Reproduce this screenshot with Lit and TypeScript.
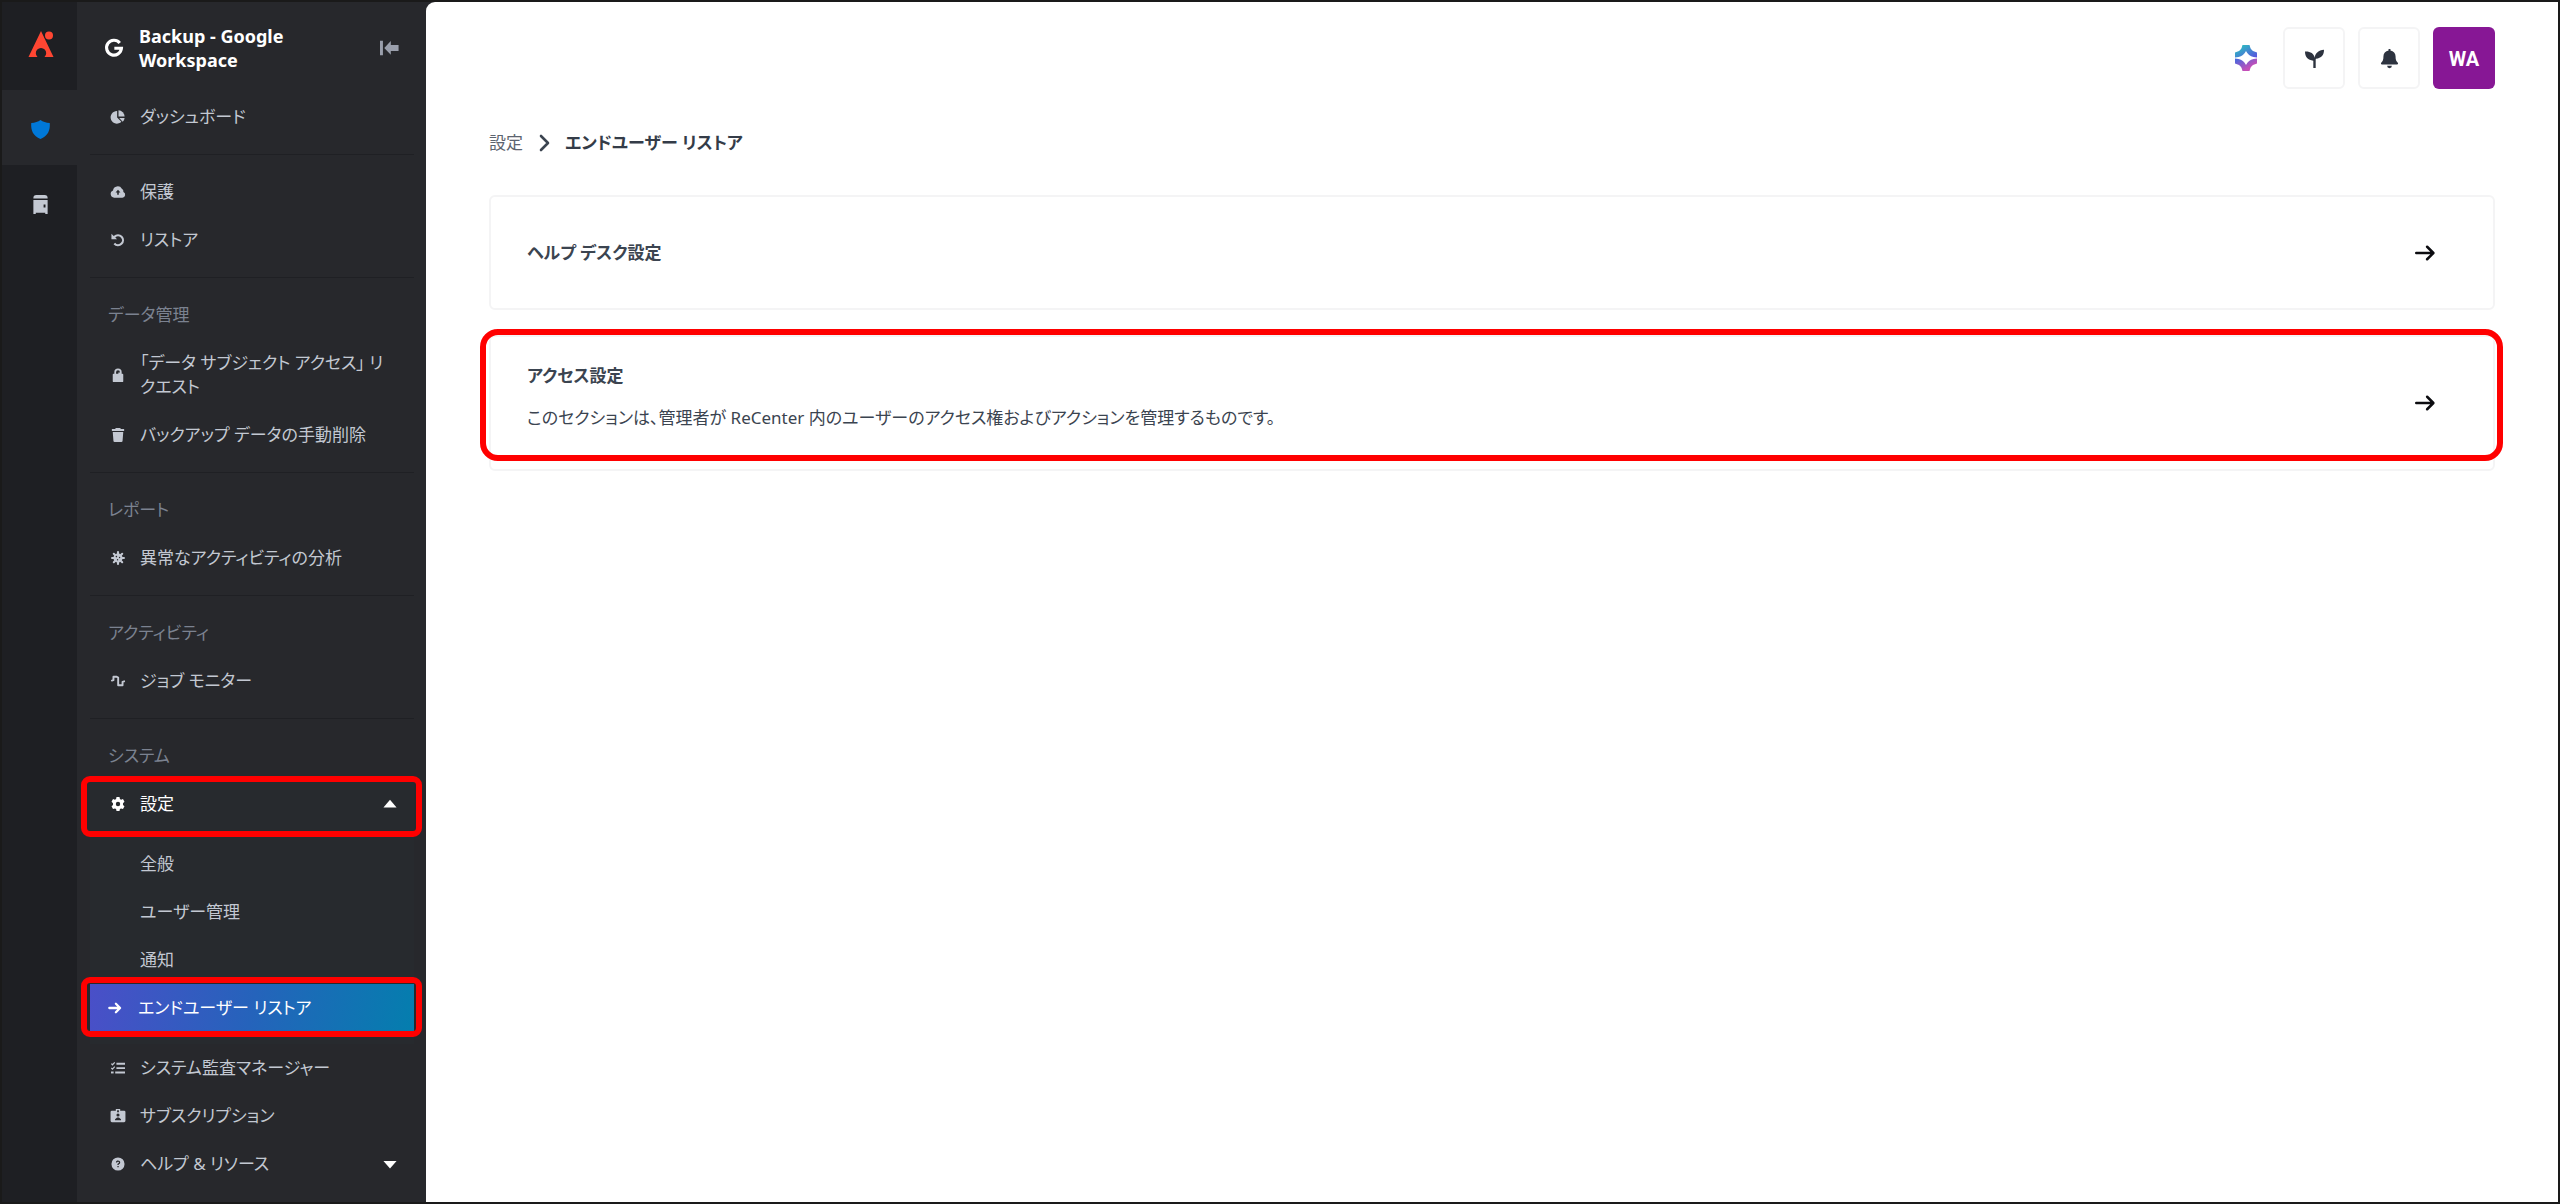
import { LitElement, html, svg, css, nothing } from "lit";
import type { SVGTemplateResult } from "lit";
import { customElement, property } from "lit/decorators.js";
import { classMap } from "lit/directives/class-map.js";

const ICONS: Record<string, SVGTemplateResult> = {
  pie: svg`<path d="M7 1.200v7.300l4.900 4.900A7.200 7.200 0 1 1 7 1.200z"/><path d="M8.600.4a7.400 7.400 0 0 1 7 7H8.600z"/><path d="M9.400 9h6.200a7 7 0 0 1-2.200 4.300z"/>`,
  cloud: svg`<path fill-rule="evenodd" d="M3.600 14.500a4.200 4.200 0 0 1-1.300-8.100A5.400 5.400 0 0 1 12.400 4.400a3.500 3.500 0 0 1 1.800 3.600A3.400 3.400 0 0 1 13 14.500zM8 5.500 5.200 8.500h1.900V11h1.800V8.500h1.900z"/>`,
  undo: svg`<path d="M.5.800v6.400h6.400L4.900 5.200a4.400 4.400 0 1 1-.2 6l-1.800 1.700A6.900 6.900 0 1 0 3.100 3.400z"/>`,
  lock: svg`<path fill-rule="evenodd" d="M3.800 6.500V4.800a4.200 4.200 0 0 1 8.400 0v1.700h.8a1 1 0 0 1 1 1V15a1 1 0 0 1-1 1H3a1 1 0 0 1-1-1V7.500a1 1 0 0 1 1-1zm2 0h2.600V5.200h1.800v-.4a2.200 2.200 0 0 0-4.400 0z"/>`,
  trash: svg`<path d="M5.500 0h5l.8 1.200H15v2.200H1V1.200h3.700zM2 4.600h12l-.8 10.200a1.300 1.300 0 0 1-1.300 1.200H4.100a1.300 1.300 0 0 1-1.300-1.200z"/>`,
  virus: svg`<g fill="none" stroke="currentColor" stroke-width="2.400" stroke-linecap="round"><path d="M8 1.200v13.600M1.200 8h13.600M3.200 3.200l9.600 9.600M12.800 3.200l-9.600 9.600"/></g><path fill-rule="evenodd" d="M8 2.800a5.200 5.200 0 1 1 0 10.400A5.200 5.200 0 0 1 8 2.800z"/><g fill="#27282c"><circle cx="6.200" cy="6.400" r=".9"/><circle cx="9.800" cy="7.400" r=".8"/><circle cx="7.500" cy="10" r=".8"/></g>`,
  wave: svg`<path fill="none" stroke="currentColor" stroke-width="2.200" stroke-linecap="round" stroke-linejoin="round" d="M1 7.500 2.800 7V3.200h3.800l1.600.8v8.800h5V9l1.800-.6"/>`,
  gear: svg`<path fill-rule="evenodd" d="M6.300 0h3.400l.5 2.200 1.300.8 2.200-.7 1.700 3L13.700 7v2l1.700 1.700-1.700 3-2.200-.7-1.300.8-.5 2.200H6.300l-.5-2.200-1.300-.8-2.200.7-1.700-3L2.300 9V7L.6 5.300l1.700-3 2.200.7 1.300-.8zM8 5.500a2.500 2.500 0 1 0 0 5 2.500 2.500 0 0 0 0-5z"/>`,
  list: svg`<path d="M6.200 2H16v2.200H6.200zM6.200 7H16v2.200H6.200zM4.800 12H16v2.200H4.800z"/><path d="M0 12h3v2.200H0z"/><path fill="none" stroke="currentColor" stroke-width="1.400" d="m.4 3 1.300 1.300L4.300 1.500M.4 8l1.300 1.300 2.600-2.800"/>`,
  badge: svg`<path fill-rule="evenodd" d="M5.500 0h5v2H15a1.500 1.500 0 0 1 1.500 1.500v10A1.500 1.500 0 0 1 15 15H1a1.500 1.500 0 0 1-1.500-1.500v-10A1.500 1.500 0 0 1 1 2h4.500zM7 1.400v2.200h2V1.400zM8 5a1.800 1.800 0 1 0 0 3.600A1.800 1.800 0 0 0 8 5zM4.600 12.800h6.800v-1.200L9 9.800H7l-2.400 1.800z"/>`,
  help: svg`<path fill-rule="evenodd" d="M8 .5a7.500 7.500 0 1 0 0 15 7.500 7.500 0 0 0 0-15zM5.600 6.200C5.700 4.600 6.700 4 8 4s2.500.8 2.500 2.200c0 1.100-.6 1.500-1.200 1.900-.5.400-.6.500-.6 1.100H7.300c0-1.300.5-1.700 1.100-2.100.5-.4.700-.5.700-.9 0-.5-.5-.9-1.100-.9s-1 .3-1.100.9zM7.300 10.200h1.500v1.600H7.300z"/>`,
  arrow: svg`<path fill="none" stroke="currentColor" stroke-width="2.600" stroke-linecap="round" stroke-linejoin="round" d="M1.500 8h12M9 3.200 13.800 8 9 12.800"/>`,
  up: svg`<path d="M8 3 15.500 12H.5z"/>`,
  down: svg`<path d="M8 13 .5 4.500h15z"/>`,
  collapse: svg`<path d="M0 1.500h2.600v13H0zM9.600 1.800v3.600H16.500v5.200H9.600V14L3.800 8z"/>`,
  google: svg`<path fill="none" stroke="currentColor" stroke-width="2.800" d="M13.100 3.500A6.600 6.600 0 1 0 14.600 8.200H8.300"/>`,
  shield: svg`<path d="M8 0c2 1.500 4.600 2.300 7.800 2.500.5 6.200-1.600 11-7.800 13.500C1.800 13.500-.3 8.700.2 2.500 3.400 2.300 6 1.500 8 0z"/>`,
  cabinet: svg`<path fill-rule="evenodd" d="M4.500 0h7A2.500 2.500 0 0 1 14 2.500V3H2v-.5A2.500 2.500 0 0 1 4.500 0zM2 4.200h12V16h-2v-1H4v1H2zM10.600 8v2.600h1.600V8z"/>`,
  sprout: svg`<path d="M0 2.200c4.600-.2 7.400 1.700 8.100 5.200C8.800 3.600 11.300 1 16 .7c.1 4.300-2.200 7-6.800 7.600-.2.200-.2.500-.2.800V16H7V9.800C2.500 9.700 0 6.900 0 2.200z"/>`,
  bell: svg`<path d="M7.200 0h1.600v1.200c2.600.4 4.300 2.300 4.300 4.900 0 2.800.5 4.200 1.900 5.500.4.500.2 1.400-.6 1.400H1.600c-.8 0-1-.9-.6-1.400 1.400-1.300 1.900-2.700 1.900-5.500 0-2.600 1.700-4.500 4.300-4.900zM6 14.200h4a2 2 0 0 1-4 0z"/>`,
  chevron: svg`<path fill="none" stroke="currentColor" stroke-width="2.600" stroke-linecap="round" stroke-linejoin="round" d="M5 1 12 8 5 15"/>`,
  go: svg`<path fill="none" stroke="currentColor" stroke-width="2" stroke-linecap="round" stroke-linejoin="round" d="M1 8h13.500M9.700 3 14.700 8l-5 5"/>`,
};

interface NavEntry {
  icon: string;
  label: string;
  expanded?: boolean;
  children?: string[];
  current?: string;
}

interface NavGroup {
  title?: string;
  entries: NavEntry[];
}

const GROUPS: NavGroup[] = [
  { entries: [{ icon: "pie", label: "ダッシュボード" }] },
  { entries: [{ icon: "cloud", label: "保護" }, { icon: "undo", label: "リストア" }] },
  {
    title: "データ管理",
    entries: [
      { icon: "lock", label: "「データ サブジェクト アクセス」 リクエスト" },
      { icon: "trash", label: "バックアップ データの手動削除" },
    ],
  },
  { title: "レポート", entries: [{ icon: "virus", label: "異常なアクティビティの分析" }] },
  { title: "アクティビティ", entries: [{ icon: "wave", label: "ジョブ モニター" }] },
  {
    title: "システム",
    entries: [
      {
        icon: "gear",
        label: "設定",
        expanded: true,
        children: ["全般", "ユーザー管理", "通知", "エンドユーザー リストア"],
        current: "エンドユーザー リストア",
      },
      { icon: "list", label: "システム監査マネージャー" },
      { icon: "badge", label: "サブスクリプション" },
      { icon: "help", label: "ヘルプ & リソース", expanded: false },
    ],
  },
];

const CARDS = [
  { title: "ヘルプ デスク設定", text: "", marked: false },
  {
    title: "アクセス設定",
    text: "このセクションは、管理者が ReCenter 内のユーザーのアクセス権およびアクションを管理するものです。",
    marked: true,
  },
];

@customElement("ui-icon")
export class UiIcon extends LitElement {
  @property() name = "";

  static styles = css`
    :host {
      display: inline-flex;
      flex: none;
      width: 16px;
      height: 16px;
    }
    svg {
      width: 100%;
      height: 100%;
      overflow: visible;
      fill: currentColor;
    }
  `;

  render() {
    return html`<svg viewBox="0 0 16 16" aria-hidden="true">${ICONS[this.name]}</svg>`;
  }
}

@customElement("side-nav")
export class SideNav extends LitElement {
  static styles = css`
    :host {
      display: block;
      flex: none;
      width: 349px;
      color: #c3c8d2;
    }
    a,
    button {
      box-sizing: border-box;
      display: flex;
      align-items: center;
      width: 100%;
      min-height: 48px;
      padding: 12px 16px 12px 20px;
      gap: 14px;
      border: 0;
      background: none;
      color: inherit;
      font: inherit;
      font-feature-settings: inherit;
      text-align: start;
      text-decoration: none;
    }
    .head {
      display: flex;
      align-items: center;
      gap: 16px;
      height: 91px;
      box-sizing: border-box;
      padding: 0 28px 0 28px;
      color: #fff;
    }
    .head ui-icon {
      width: 18px;
      height: 18px;
    }
    .name {
      flex: 1;
      margin: 0;
      font-size: 18px;
      line-height: 24px;
      font-weight: 700;
    }
    .fold {
      width: auto;
      min-height: 0;
      padding: 0;
      color: #9a9fac;
    }
    .group {
      margin: 0 12px 0 13px;
      padding: 13px 0;
      border-top: 1px solid #1f2024;
    }
    .group:first-of-type {
      border-top: 0;
      padding-top: 0;
    }
    .title {
      margin: 0;
      padding: 12px 18px;
      font-size: 17px;
      line-height: 24px;
      font-weight: 400;
      color: #7b8290;
    }
    .label {
      flex: 1;
    }
    .entry ui-icon {
      width: 14px;
      height: 14px;
      margin: 0 1px;
    }
    .open {
      padding-bottom: 12px;
      background: #272a2e;
    }
    .open > button,
    .closed ui-icon:last-child {
      color: #fff;
    }
    .open > button {
      margin-bottom: 12px;
    }
    .sub {
      padding-left: 50px;
    }
    .current {
      gap: 16px;
      padding-left: 18px;
      color: #fff;
      background: linear-gradient(100deg, #4a4fc8, #2563bb 50%, #047eae);
    }
    .current ui-icon {
      margin: 0;
    }
    .marked {
      position: relative;
    }
    .marked::after {
      content: "";
      position: absolute;
      inset: -4px -8px -9px -9px;
      border: 6px solid #f00;
      border-radius: 9px;
      pointer-events: none;
    }
    .current.marked::after {
      inset: -7px -8px -5px -9px;
    }
  `;

  private entry(item: NavEntry) {
    if (item.expanded === undefined) {
      return html`<div class="entry">
        <a href="#"><ui-icon name=${item.icon}></ui-icon><span class="label">${item.label}</span></a>
      </div>`;
    }
    return html`<div class=${classMap({ entry: true, open: item.expanded, closed: !item.expanded })}>
      <button type="button" class=${classMap({ marked: item.expanded })} aria-expanded=${item.expanded}>
        <ui-icon name=${item.icon}></ui-icon><span class="label">${item.label}</span
        ><ui-icon name=${item.expanded ? "up" : "down"}></ui-icon>
      </button>
      ${(item.children ?? []).map((child) =>
        child === item.current
          ? html`<a href="#" class="current marked" aria-current="page"
              ><ui-icon name="arrow"></ui-icon><span class="label">${child}</span></a
            >`
          : html`<a href="#" class="sub">${child}</a>`
      )}
    </div>`;
  }

  render() {
    return html`
      <header class="head">
        <ui-icon name="google"></ui-icon>
        <h1 class="name">Backup - Google<br />Workspace</h1>
        <button type="button" class="fold" aria-label="メニューを折りたたむ"><ui-icon name="collapse"></ui-icon></button>
      </header>
      <nav>
        ${GROUPS.map(
          (group) => html`<section class="group">
            ${group.title ? html`<h2 class="title">${group.title}</h2>` : nothing}
            ${group.entries.map((item) => this.entry(item))}
          </section>`
        )}
      </nav>
    `;
  }
}

@customElement("app-root")
export class AppRoot extends LitElement {
  static styles = css`
    :host {
      box-sizing: border-box;
      display: flex;
      min-height: 100vh;
      border: 2px solid #1a1a1a;
      background: #27282c;
      font-family: "Noto Sans", "Noto Sans CJK JP", sans-serif;
      font-size: 17px;
      line-height: 24px;
      font-feature-settings: "palt";
    }
    a {
      color: inherit;
      text-decoration: none;
    }
    .rail {
      flex: none;
      width: 75px;
      background: #1e1f23;
    }
    .rail a {
      display: flex;
      align-items: center;
      justify-content: center;
      box-sizing: border-box;
      height: 75px;
      padding-left: 2px;
      color: #c3c8d2;
    }
    .rail ui-icon {
      width: 19px;
      height: 19px;
    }
    .rail .brand {
      height: 88px;
      padding-bottom: 4px;
    }
    .brand svg {
      width: 26px;
      height: 26px;
    }
    .rail .active {
      padding-top: 4px;
      background: #27282c;
      color: #0078d8;
    }
    .rail .item {
      padding-top: 4px;
    }
    main {
      flex: 1;
      min-width: 0;
      padding: 25px 63px 25px 63px;
      border-top-left-radius: 9px;
      background: #fff;
      color: #3b4450;
    }
    .tools {
      display: flex;
      align-items: center;
      justify-content: flex-end;
      gap: 13px;
    }
    .tools button {
      display: flex;
      align-items: center;
      justify-content: center;
      box-sizing: border-box;
      width: 62px;
      height: 62px;
      padding: 0;
      border: 2px solid #f4f4f5;
      border-radius: 6px;
      background: #fff;
      color: #2d333f;
    }
    .tools ui-icon {
      width: 19px;
      height: 19px;
    }
    .tools .assist {
      width: 48px;
      border: 0;
    }
    .assist svg {
      width: 22px;
      height: 26px;
    }
    .tools .user {
      border: 0;
      background: #871795;
      color: #fff;
      padding-top: 2px;
      font: 700 20px/24px Roboto, sans-serif;
    }
    .crumbs {
      display: flex;
      align-items: center;
      gap: 13px;
      margin: 42px 0 40px;
    }
    .crumbs a {
      color: #5d646f;
    }
    .crumbs b {
      color: #343c48;
    }
    .cards {
      display: grid;
      gap: 25px;
    }
    .card {
      position: relative;
      display: flex;
      align-items: center;
      min-height: 115px;
      box-sizing: border-box;
      padding: 27px 58px 27px 36px;
      border: 2px solid #f4f4f5;
      border-radius: 6px;
    }
    .body {
      flex: 1;
    }
    .card h2 {
      margin: 0;
      font-size: 17px;
      line-height: 24px;
      font-weight: 700;
    }
    .card p {
      margin: 18px 0 12px;
    }
    .card ui-icon {
      width: 20px;
      height: 20px;
      color: #0c0c10;
    }
    .marked::after {
      content: "";
      position: absolute;
      inset: -8px -10px 8px -11px;
      border: 6px solid #f00;
      border-radius: 18px;
      pointer-events: none;
    }
  `;

  render() {
    return html`
      <nav class="rail" aria-label="製品">
        <a href="#" class="brand" aria-label="ホーム">
          <svg viewBox="0 0 26 26" fill="#ff4632" aria-hidden="true">
            <path d="M13 0 25.500 26H16.500A5.200 5.200 0 1 0 9.500 26H.5z" />
            <circle cx="21" cy="4.500" r="5" fill="#1e1f23" />
            <circle cx="21" cy="4.500" r="4" />
          </svg>
        </a>
        <a href="#" class="active" aria-label="バックアップ"><ui-icon name="shield"></ui-icon></a>
        <a href="#" class="item" aria-label="アーカイブ"><ui-icon name="cabinet"></ui-icon></a>
      </nav>
      <side-nav></side-nav>
      <main>
        <div class="tools">
          <button type="button" class="assist" aria-label="アシスタント">
            <svg viewBox="0 0 22 26" aria-hidden="true">
              <defs>
                <linearGradient id="top" x1="0" y1="0" x2="1" y2="1">
                  <stop offset=".2" stop-color="#2fb4c4" />
                  <stop offset="1" stop-color="#5a4fe0" />
                </linearGradient>
                <linearGradient id="bottom" x1="0" y1="0" x2="1" y2="1">
                  <stop offset="0" stop-color="#3f6ae0" />
                  <stop offset=".7" stop-color="#c44fb8" />
                </linearGradient>
              </defs>
              <path
                fill="url(#top)"
                d="M7.500 0h7l1 3.200q1 1.700 2.500 2.800l4 1.500v5l-3.500-.5q-5-1-7.500-6-2.500 5-7.500 6L0 12.500v-5L4 6q1.500-1.100 2.500-2.800z"
              />
              <path
                fill="url(#bottom)"
                d="M7.500 26h7l1-3.200q1-1.700 2.500-2.800l4-1.500v-5l-3.500.5q-5 1-7.500 6-2.500-5-7.500-6L0 13.500v5L4 20q1.500 1.100 2.500 2.800z"
              />
            </svg>
          </button>
          <button type="button" aria-label="新機能"><ui-icon name="sprout"></ui-icon></button>
          <button type="button" aria-label="通知"><ui-icon name="bell"></ui-icon></button>
          <button type="button" class="user">WA</button>
        </div>
        <nav class="crumbs">
          <a href="#">設定</a>
          <ui-icon name="chevron"></ui-icon>
          <b aria-current="page">エンドユーザー リストア</b>
        </nav>
        <div class="cards">
          ${CARDS.map(
            (card) => html`<a href="#" class=${classMap({ card: true, marked: card.marked })}>
              <div class="body">
                <h2>${card.title}</h2>
                ${card.text ? html`<p>${card.text}</p>` : nothing}
              </div>
              <ui-icon name="go"></ui-icon>
            </a>`
          )}
        </div>
      </main>
    `;
  }
}
